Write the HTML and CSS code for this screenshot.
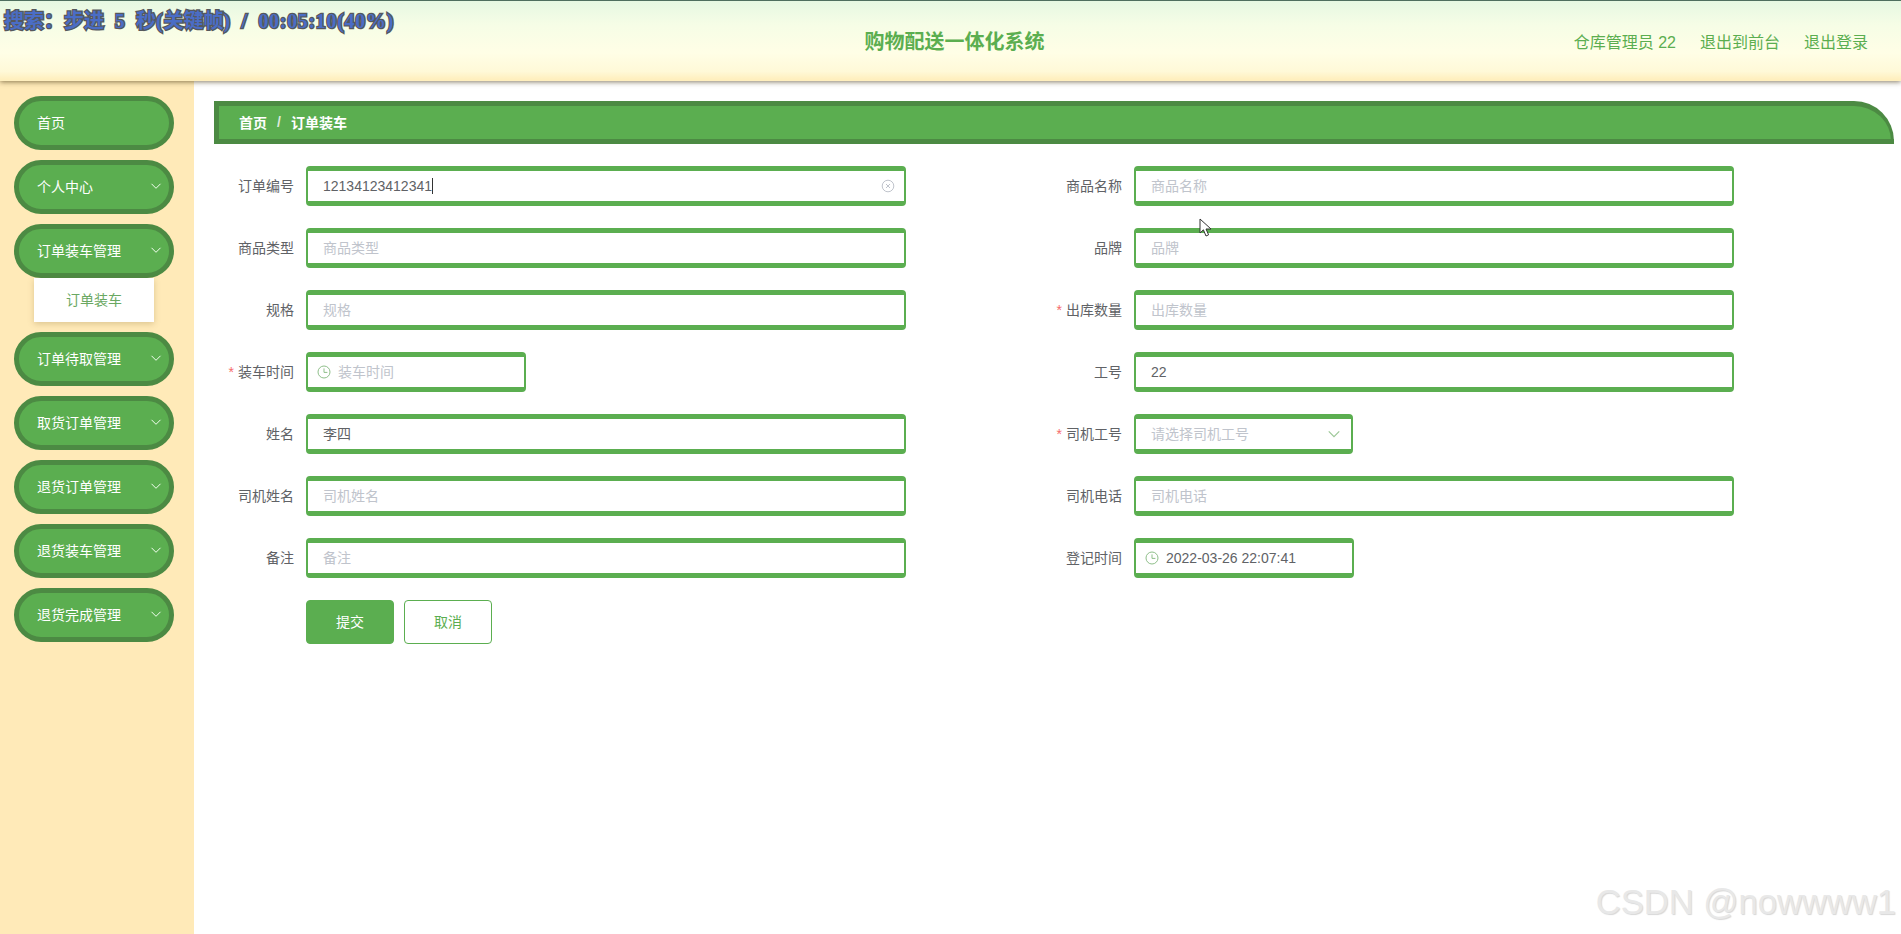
FILE: index.html
```html
<!DOCTYPE html>
<html lang="zh-CN">
<head>
<meta charset="utf-8">
<title>购物配送一体化系统</title>
<link rel="stylesheet" href="styles.css">
</head>
<body>
<svg class="sprites" width="0" height="0" aria-hidden="true">
  <symbol id="chev" viewBox="0 0 12 12"><path d="M1.5 3.8 6 8.3l4.5-4.5" fill="none" stroke="currentColor" stroke-width="1"/></symbol>
  <symbol id="clock" viewBox="0 0 14 14"><circle cx="7" cy="7" r="6" fill="none" stroke="currentColor" stroke-width="1"/><path d="M7 3.4V7.4h3.4" fill="none" stroke="currentColor" stroke-width="1"/></symbol>
  <symbol id="clear" viewBox="0 0 14 14"><circle cx="7" cy="7" r="5.8" fill="none" stroke="currentColor" stroke-width="1"/><path d="M5 5l4 4M9 5l-4 4" fill="none" stroke="currentColor" stroke-width="1"/></symbol>
</svg>
<header class="topbar">
  <div class="title">购物配送一体化系统</div>
  <nav class="userbar">
    <span>仓库管理员 22</span>
    <span>退出到前台</span>
    <span>退出登录</span>
  </nav>
</header>
<div class="layout">
  <aside class="sidebar">
    <div class="pill"><span>首页</span></div>
    <div class="pill"><span>个人中心</span><svg class="chev"><use href="#chev"/></svg></div>
    <div class="pill"><span>订单装车管理</span><svg class="chev"><use href="#chev"/></svg></div>
    <div class="submenu">订单装车</div>
    <div class="pill"><span>订单待取管理</span><svg class="chev"><use href="#chev"/></svg></div>
    <div class="pill"><span>取货订单管理</span><svg class="chev"><use href="#chev"/></svg></div>
    <div class="pill"><span>退货订单管理</span><svg class="chev"><use href="#chev"/></svg></div>
    <div class="pill"><span>退货装车管理</span><svg class="chev"><use href="#chev"/></svg></div>
    <div class="pill"><span>退货完成管理</span><svg class="chev"><use href="#chev"/></svg></div>
  </aside>
  <main class="content">
    <div class="crumb"><b>首页</b><i>/</i><b>订单装车</b></div>
    <form class="form">
      <div class="item"><label>订单编号</label><div class="field wide"><span class="val">12134123412341</span><span class="caret"></span><svg class="clear"><use href="#clear"/></svg></div></div>
      <div class="item"><label>商品名称</label><div class="field wide"><span class="ph">商品名称</span></div></div>
      <div class="item"><label>商品类型</label><div class="field wide"><span class="ph">商品类型</span></div></div>
      <div class="item"><label>品牌</label><div class="field wide"><span class="ph">品牌</span></div></div>
      <div class="item"><label>规格</label><div class="field wide"><span class="ph">规格</span></div></div>
      <div class="item"><label><em>*</em>出库数量</label><div class="field wide"><span class="ph">出库数量</span></div></div>
      <div class="item"><label><em>*</em>装车时间</label><div class="field short date"><svg class="clock"><use href="#clock"/></svg><span class="ph">装车时间</span></div></div>
      <div class="item"><label>工号</label><div class="field wide"><span class="val">22</span></div></div>
      <div class="item"><label>姓名</label><div class="field wide"><span class="val han">李四</span></div></div>
      <div class="item"><label><em>*</em>司机工号</label><div class="field select"><span class="ph">请选择司机工号</span><svg class="sel"><use href="#chev"/></svg></div></div>
      <div class="item"><label>司机姓名</label><div class="field wide"><span class="ph">司机姓名</span></div></div>
      <div class="item"><label>司机电话</label><div class="field wide"><span class="ph">司机电话</span></div></div>
      <div class="item"><label>备注</label><div class="field wide"><span class="ph">备注</span></div></div>
      <div class="item"><label>登记时间</label><div class="field short date"><svg class="clock"><use href="#clock"/></svg><span class="val">2022-03-26 22:07:41</span></div></div>
      <div class="actions">
        <button type="button" class="btn primary">提交</button>
        <button type="button" class="btn ghost">取消</button>
      </div>
    </form>
  </main>
</div>
<div class="osd"><span class="cjk">搜索：步进</span> 5 <span class="cjk">秒</span>(<span class="cjk">关键帧</span>) / 00:05:10(40%)</div>
<svg class="pointer" width="14" height="20" viewBox="0 0 14 20"><path d="M1 1v14l3.4-3.2L7 18l2.6-1.2L7 11h5z" fill="#fff" stroke="#333" stroke-width="1"/></svg>
<div class="mark">CSDN @nowwww1</div>
</body>
</html>
```
FILE: styles.css
```css
* { box-sizing: border-box; }
html, body { height: 100%; }
body {
  margin: 0;
  overflow: hidden;
  position: relative;
  background: #fff;
  font-family: "Liberation Sans", "Noto Sans CJK SC", sans-serif;
  font-size: 14px;
  color: #606266;
}
.sprites { position: absolute; }
.topbar {
  position: relative;
  z-index: 2;
  height: 81px;
  border-top: 1px solid #4f6f5f;
  background: linear-gradient(180deg, #e6f8e2 0%, #f6fde6 30%, #fffee6 65%, #fff9d8 88%, #ffefbe 98%);
  box-shadow: 0 1px 5px rgba(70, 55, 20, .65);
  display: flex;
  align-items: center;
  justify-content: center;
}
.title {
  font-size: 20px;
  font-weight: 700;
  color: #5bae50;
  line-height: 28px;
  margin: 2px 0 0 8px;
}
.userbar {
  position: absolute;
  right: 33px;
  top: 0;
  height: 80px;
  display: flex;
  align-items: center;
  gap: 24px;
  font-size: 16px;
  color: #5bae50;
}
.layout { display: flex; height: 853px; }
.sidebar {
  width: 194px;
  flex: none;
  background: #ffeab8;
  padding: 15px 0 0 14px;
}
.pill {
  width: 160px;
  height: 54px;
  margin-bottom: 10px;
  border: 5px solid #4c8a43;
  border-radius: 27px;
  background: #5bae50;
  color: #fff;
  display: flex;
  align-items: center;
  justify-content: space-between;
  padding: 0 7px 2px 18px;
}
.chev { width: 12px; height: 12px; color: #f2fff0; }
.submenu {
  width: 120px;
  height: 44px;
  margin: -10px 0 10px 20px;
  padding-bottom: 2px;
  background: #fff;
  box-shadow: 0 2px 6px rgba(120, 90, 30, .25);
  color: #6aa862;
  display: flex;
  align-items: center;
  justify-content: center;
}
.content {
  flex: 1;
  padding: 20px 7px 0 20px;
  min-width: 0;
}
.crumb {
  height: 43px;
  border: 5px solid #4c8a43;
  border-right-width: 3px;
  border-radius: 0 40px 0 0 / 0 40px 0 0;
  background: #5bae50;
  color: #fff;
  display: flex;
  align-items: center;
  padding: 0 0 2px 20px;
}
.crumb b { font-weight: 700; }
.crumb i { font-style: normal; font-weight: 700; color: #dfe9dc; margin: 0 10px; }
.form {
  margin-top: 22px;
  display: grid;
  grid-template-columns: 828px 828px;
  row-gap: 22px;
}
.item { display: flex; align-items: center; gap: 12px; height: 40px; }
.item label { width: 80px; padding-bottom: 2px; text-align: right; flex: none; white-space: nowrap; }
.item em { color: #f56c6c; font-style: normal; margin-right: 4px; }
.field {
  height: 40px;
  border: solid #5bae50;
  border-width: 5px 2px;
  border-radius: 4px;
  background: #fff;
  display: flex;
  align-items: center;
  padding: 0 15px;
  position: relative;
}
.wide { width: 600px; }
.short { width: 220px; }
.select { width: 219px; }
.ph { color: #c0c4cc; padding-bottom: 2px; }
.val { color: #606266; }
.han { padding-bottom: 2px; }
.caret { width: 1px; height: 16px; background: #333; }
.clear { position: absolute; right: 9px; top: 8px; width: 14px; height: 14px; color: #c0c4cc; }
.date { padding-left: 9px; }
.date .clock { width: 14px; height: 14px; color: #8fbf8a; flex: none; margin-right: 7px; }
.select { justify-content: space-between; padding-right: 10px; }
.sel { width: 14px; height: 14px; color: #9cc797; }
.actions { grid-column: 1 / -1; display: flex; gap: 10px; padding-left: 92px; }
.btn {
  width: 88px;
  height: 44px;
  border-radius: 4px;
  font: inherit;
  padding: 0 0 2px;
}
.primary { background: #5bae50; border: 1px solid #5bae50; color: #fff; }
.ghost { background: #fff; border: 1px solid #5bae50; color: #5bae50; }
.osd {
  position: absolute;
  left: 4px;
  top: 7px;
  z-index: 3;
  white-space: pre;
  font-family: "Liberation Serif", "Noto Sans CJK SC", serif;
  font-size: 20px;
  font-weight: 700;
  line-height: 26px;
  letter-spacing: .69px;
  word-spacing: 5px;
  color: #4a6dc6;
  -webkit-text-stroke: 2.5px #55585c;
  paint-order: stroke fill;
}
.osd .cjk { font-family: "Noto Sans CJK SC", sans-serif; letter-spacing: 0; }
.pointer { position: absolute; left: 1199px; top: 218px; z-index: 3; }
.mark {
  position: absolute;
  right: 5px;
  bottom: 12px;
  z-index: 3;
  font-family: "Liberation Sans", sans-serif;
  font-size: 34.6px;
  line-height: 40px;
  color: #e8e8e8;
  text-shadow: 1px 1px 1px rgba(0, 0, 0, .16);
  white-space: nowrap;
}
```
